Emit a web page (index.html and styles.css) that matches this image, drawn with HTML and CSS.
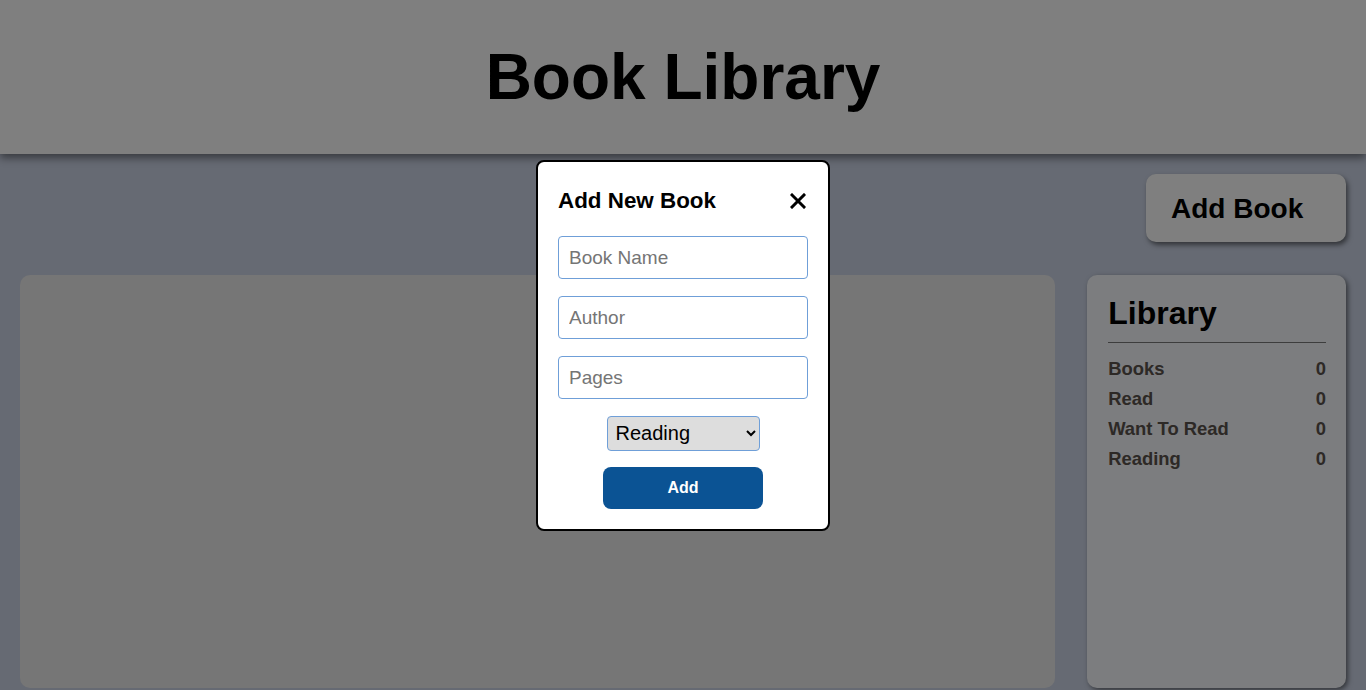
FILE: index.html
```html
<!DOCTYPE html>
<html lang="en">
<head>
<meta charset="UTF-8">
<title>Book Library</title>
<link rel="stylesheet" href="styles.css">
</head>
<body>
<header class="site-header">
  <h1 class="site-title">Book Library</h1>
</header>
<main class="content">
  <div class="toolbar">
    <button class="add-book-btn" type="button">Add Book</button>
  </div>
  <div class="layout">
    <section class="books"></section>
    <aside class="library">
      <h2 class="library-title">Library</h2>
      <ul class="stats">
        <li class="stat"><span>Books</span><span>0</span></li>
        <li class="stat"><span>Read</span><span>0</span></li>
        <li class="stat"><span>Want To Read</span><span>0</span></li>
        <li class="stat"><span>Reading</span><span>0</span></li>
      </ul>
    </aside>
  </div>
</main>
<div class="overlay">
  <form class="modal">
    <div class="modal-head">
      <h3 class="modal-title">Add New Book</h3>
      <button class="close-btn" type="button" aria-label="Close">
        <svg width="16" height="16" viewBox="0 0 16 16"><path d="M2 2 L14 14 M14 2 L2 14" stroke="#000" stroke-width="3" stroke-linecap="square" fill="none"/></svg>
      </button>
    </div>
    <input class="field" type="text" placeholder="Book Name">
    <input class="field" type="text" placeholder="Author">
    <input class="field" type="number" placeholder="Pages">
    <select class="status">
      <option>Reading</option>
      <option>Read</option>
      <option>Want To Read</option>
    </select>
    <button class="submit-btn" type="button">Add</button>
  </form>
</div>
</body>
</html>
```
FILE: styles.css
```css
* { box-sizing: border-box; }
html, body { margin: 0; padding: 0; }
body {
  font-family: "Liberation Sans", Arial, sans-serif;
  background: #ccd4e6;
  height: 100vh;
  display: flex;
  flex-direction: column;
  overflow: hidden;
}
.site-header {
  background: #fefffe;
  height: 154px;
  display: flex;
  align-items: center;
  justify-content: center;
  box-shadow: 0 4px 8px rgba(0,0,0,0.45);
  position: relative;
  z-index: 1;
}
.site-title {
  margin: 0;
  font-size: 64px;
  font-weight: 700;
  line-height: 74px;
  color: #000;
}
.content {
  flex: 1;
  display: flex;
  flex-direction: column;
  padding: 20px 20px 2px;
  gap: 33px;
  min-height: 0;
}
.toolbar {
  display: flex;
  justify-content: flex-end;
}
.add-book-btn {
  width: 200px;
  height: 68px;
  padding: 2px 0 0 25px;
  text-align: left;
  font-family: inherit;
  font-size: 28px;
  font-weight: 700;
  color: #000;
  background: #fefffe;
  border: none;
  border-radius: 10px;
  box-shadow: 2px 3px 5px rgba(0,0,0,0.5);
}
.layout {
  flex: 1;
  display: grid;
  grid-template-columns: 4fr 1fr;
  gap: 32px;
  min-height: 0;
}
.books {
  background: #ececec;
  border-radius: 10px;
}
.library {
  background: #f8fafe;
  border-radius: 10px;
  padding: 20px 20px 20px 21px;
  box-shadow: 2px 2px 5px rgba(0,0,0,0.5);
}
.library-title {
  margin: 0;
  font-size: 32px;
  font-weight: 700;
  line-height: 37px;
  color: #000;
  padding-bottom: 10px;
  margin-right: 0;
  border-bottom: 1px solid #7a7a7a;
}
.stats {
  list-style: none;
  margin: 11px 0 0;
  padding: 0;
}
.stat {
  display: flex;
  justify-content: space-between;
  font-size: 18.4px;
  font-weight: 700;
  line-height: 30px;
  color: #5a524c;
}
.overlay {
  position: fixed;
  inset: 0;
  background: rgba(0,0,0,0.5);
  display: flex;
  align-items: center;
  justify-content: center;
  z-index: 10;
}
.modal {
  width: 294px;
  background: #fff;
  border: 2px solid #000;
  border-radius: 8px;
  padding: 20px;
  display: flex;
  flex-direction: column;
  align-items: center;
  gap: 17px;
}
.modal-head {
  width: 100%;
  height: 36px;
  padding-top: 2px;
  padding-right: 2px;
  display: flex;
  align-items: center;
  justify-content: space-between;
  margin-bottom: 1px;
}
.modal-title {
  margin: 0;
  font-size: 22.4px;
  font-weight: 700;
  color: #000;
}
.close-btn {
  background: none;
  border: none;
  padding: 0;
  width: 16px;
  height: 16px;
  display: flex;
}
.field {
  width: 250px;
  height: 43px;
  padding: 1px 10px 0;
  border: 1px solid #6f9fd8;
  border-radius: 4px;
  font-family: inherit;
  font-size: 19px;
  color: #000;
  background: #fff;
  outline: none;
  -moz-appearance: textfield;
}
.field::-webkit-outer-spin-button,
.field::-webkit-inner-spin-button { -webkit-appearance: none; margin: 0; }
.field::placeholder { color: #757575; }
.status {
  width: 153px;
  height: 35px;
  font-family: inherit;
  font-size: 20px;
  color: #000;
  background: #ddd;
  border: 1px solid #6f9fd8;
  border-radius: 4px;
  padding: 0 4px;
}
.submit-btn {
  width: 160px;
  height: 42px;
  margin-top: -1px;
  background: #0b5394;
  color: #fff;
  border: none;
  border-radius: 8px;
  font-family: inherit;
  font-size: 16px;
  font-weight: 700;
}
```
